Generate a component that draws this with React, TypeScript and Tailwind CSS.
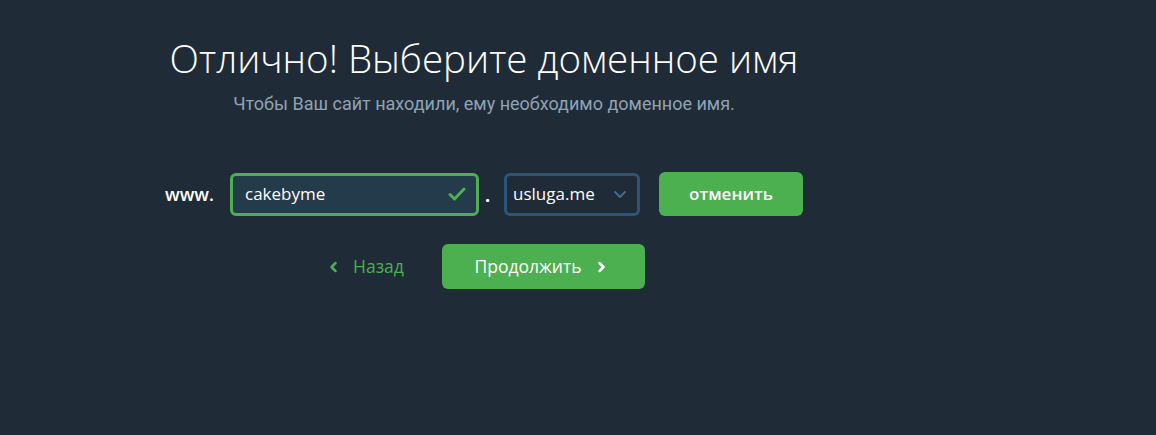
import React from "react";

const App: React.FC = () => {
  return (
    <div className="w-full h-[435px] bg-[#1f2b37] font-['Open_Sans',sans-serif] overflow-hidden">
      <div className="w-[968px] pt-[33px]">
        {/* Heading */}
        <div className="text-center">
          <h1 className="text-[38.5px] leading-[50px] font-light text-white">
            Отлично! Выберите доменное имя
          </h1>
          <p className="mt-[9px] text-[18px] leading-[24px] text-[#8fa3b3] font-['Roboto',sans-serif]">
            Чтобы Ваш сайт находили, ему необходимо доменное имя.
          </p>
        </div>

        {/* Domain row */}
        <div className="flex items-center mt-[56px] pl-[165px]">
          <span className="text-[18px] font-semibold text-white w-[65px]">www.</span>
          <div className="flex items-center justify-between w-[249px] h-[43px] rounded-[6px] border-[3px] border-[#4caf50] bg-[#243b4b] pl-[12px] pr-[10px]">
            <span className="text-[17px] text-white">cakebyme</span>
            <svg width="18" height="14" viewBox="0 0 18 14" fill="none">
              <path d="M2 7.5 L6.5 12 L16 2" stroke="#4caf50" strokeWidth="3" strokeLinecap="round" strokeLinejoin="round" />
            </svg>
          </div>
          <span className="w-[25px] pl-[6px] pt-[3px] text-[18px] font-bold text-white">.</span>
          <div className="flex items-center justify-between w-[136px] h-[43px] rounded-[6px] border-[3px] border-[#2d5579] bg-[#1f2b37] pl-[6px] pr-[10px]">
            <span className="text-[17px] text-white">usluga.me</span>
            <svg width="14" height="9" viewBox="0 0 14 9" fill="none">
              <path d="M2 2 L7 7 L12 2" stroke="#3f6b8f" strokeWidth="2" strokeLinecap="round" strokeLinejoin="round" />
            </svg>
          </div>
          <button className="ml-[19px] w-[144px] h-[44px] rounded-[6px] bg-[#4caf50] text-white text-[17px] font-semibold">
            отменить
          </button>
        </div>

        {/* Navigation row */}
        <div className="flex items-center mt-[28px] pl-[329px]">
          <button className="flex items-center gap-[15px] text-[#4caf50] text-[17.5px] w-[113px]">
            <svg width="9" height="12" viewBox="0 0 9 12" fill="none">
              <path d="M6.5 2 L2.5 6 L6.5 10" stroke="#4caf50" strokeWidth="2.5" strokeLinecap="round" strokeLinejoin="round" />
            </svg>
            Назад
          </button>
          <button className="flex items-center justify-center gap-[15px] pr-[7px] w-[203px] h-[45px] rounded-[6px] bg-[#4caf50] text-white text-[17.5px] font-medium">
            Продолжить
            <svg width="9" height="12" viewBox="0 0 9 12" fill="none">
              <path d="M2.5 2 L6.5 6 L2.5 10" stroke="white" strokeWidth="2.5" strokeLinecap="round" strokeLinejoin="round" />
            </svg>
          </button>
        </div>
      </div>
    </div>
  );
};

export default App;
